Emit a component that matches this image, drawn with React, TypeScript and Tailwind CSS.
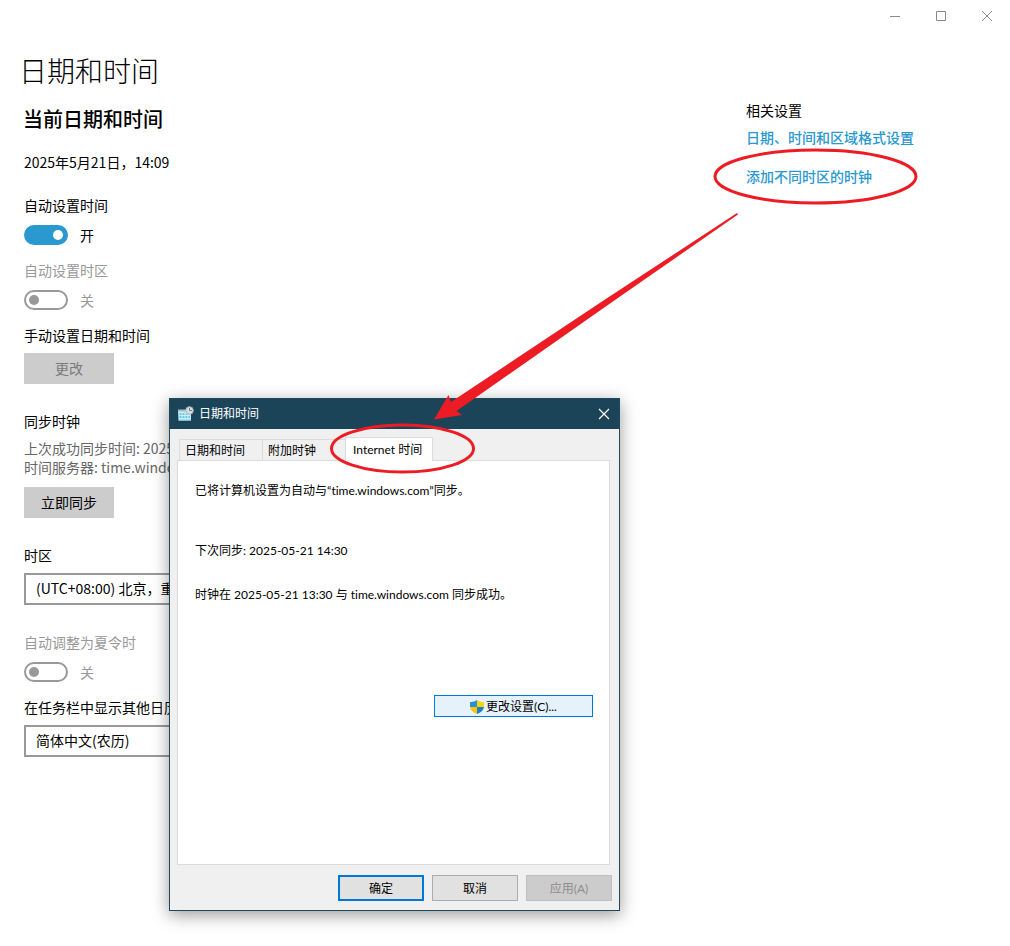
import { useState } from "react";
import type { ReactNode } from "react";

const TABS = ["日期和时间", "附加时钟", "Internet 时间"];

interface ToggleProps {
  label: string;
  defaultOn?: boolean;
  disabled?: boolean;
}

function Toggle({ label, defaultOn = false, disabled = false }: ToggleProps) {
  const [on, setOn] = useState(defaultOn);

  return (
    <label className={disabled ? "block text-[#999999]" : "block text-black"}>
      <span className="block leading-5">{label}</span>
      <span className="mt-2 flex h-6 items-center gap-3">
        <input
          type="checkbox"
          role="switch"
          checked={on}
          disabled={disabled}
          onChange={(e) => setOn(e.target.checked)}
          className="h-5 w-11 appearance-none rounded-full border-2 border-[#999999] bg-white p-[3px] before:block before:size-[10px] before:rounded-full before:bg-[#999999] checked:border-[#2999cf] checked:bg-[#2999cf] checked:before:ml-6 checked:before:bg-white"
        />
        <span>{on ? "开" : "关"}</span>
      </span>
    </label>
  );
}

interface SelectFieldProps {
  id: string;
  label: string;
  options: string[];
}

function SelectField({ id, label, options }: SelectFieldProps) {
  return (
    <div>
      <label htmlFor={id} className="block leading-5">
        {label}
      </label>
      <select
        id={id}
        className="mt-2 block h-8 w-full max-w-96 appearance-none border-2 border-[#999999] bg-white px-[10px] pb-[2px] text-sm"
      >
        {options.map((option) => (
          <option key={option}>{option}</option>
        ))}
      </select>
    </div>
  );
}

function CaptionButton({ name, children }: { name: string; children: ReactNode }) {
  return (
    <button
      type="button"
      aria-label={name}
      className="flex h-8 w-[46px] items-center justify-center text-[#8a8a8a]"
    >
      <svg width="12" height="12" viewBox="0 0 12 12" fill="none" stroke="currentColor">
        {children}
      </svg>
    </button>
  );
}

function CalendarClockIcon() {
  return (
    <svg width="16" height="16" viewBox="0 0 16 16">
      <path d="M0 4h13v10.5H0.5z" fill="#c9eef8" />
      <path d="M0 3.5h8v2H0z" fill="#a9bcc5" />
      <path
        d="M1.5 7h2v2h-2zM4.5 7h2v2h-2zM7.5 8h2v1h-2zM1.5 10h2v2h-2zM4.5 10h2v2h-2zM7.5 10h2v2h-2zM10.5 10h1.5v2h-1.5z"
        fill="#6ccbe6"
      />
      <path d="M0.5 13.5h12v1h-12z" fill="#8fd4e8" />
      <circle cx="11.5" cy="4.5" r="3.8" fill="#d5dde1" stroke="#a3b1b8" />
      <path d="M11.5 2v2.5h2.5" fill="none" stroke="#6c7c85" />
    </svg>
  );
}

function ShieldIcon() {
  return (
    <svg width="14" height="14" viewBox="0 0 14 14">
      <path d="M7 0C5 1.4 2.6 2 0 2V7H7z" fill="#2f8fd6" />
      <path d="M7 0c2 1.4 4.4 2 7 2V7H7z" fill="#fcd116" />
      <path d="M0 7C0.5 10.4 3.2 12.4 7 14V7z" fill="#fbc50f" />
      <path d="M14 7C13.5 10.4 10.8 12.4 7 14V7z" fill="#1f7fc8" />
    </svg>
  );
}

function DateTimeDialog() {
  const [activeTab, setActiveTab] = useState(TABS[2]);

  return (
    <div
      role="dialog"
      aria-label="日期和时间"
      className="absolute top-[398px] left-[169px] w-[451px] border border-[#1f485c] bg-[#f0f0f0] font-[Lato,'Noto_Sans_CJK_SC',sans-serif] text-xs text-black shadow-[0_4px_16px_rgba(0,0,0,0.4)] [font-variant-ligatures:none]"
    >
      {/* Title bar */}
      <div className="flex h-[30px] items-center bg-[#1c4459] pl-2 text-white">
        <CalendarClockIcon />
        <span className="ml-[5px] flex-1">日期和时间</span>
        <button type="button" aria-label="关闭" className="flex h-full w-[30px] items-center justify-center">
          <svg width="12" height="12" viewBox="0 0 12 12" stroke="currentColor" strokeWidth="1.2">
            <path d="M1 1l10 10M11 1L1 11" />
          </svg>
        </button>
      </div>

      {/* Tabs */}
      <div className="pt-2 pr-[9px] pl-[7px]">
        <div role="tablist" className="flex items-end pl-[2px]">
          {TABS.map((tab) => (
            <button
              key={tab}
              type="button"
              role="tab"
              aria-selected={tab === activeTab}
              onClick={() => setActiveTab(tab)}
              className={
                tab === activeTab
                  ? "relative z-10 -mb-px h-6 w-[88px] border border-b-0 border-[#dcdcdc] bg-white pl-[7px] text-left"
                  : "h-[21px] w-[83px] border border-r-0 border-b-0 border-[#dcdcdc] bg-[#f0f0f0] pt-px pl-[5px] text-left"
              }
            >
              {tab}
            </button>
          ))}
        </div>

        <div
          role="tabpanel"
          className="flex min-h-[405px] flex-col border border-[#dcdcdc] bg-white pt-5 pr-4 pl-[17px] leading-5"
        >
          <p>已将计算机设置为自动与“time.windows.com”同步。</p>
          <p className="mt-10">下次同步: 2025-05-21 14:30</p>
          <p className="mt-6">时钟在 2025-05-21 13:30 与 time.windows.com 同步成功。</p>
          <button
            type="button"
            className="mt-[90px] flex h-[22px] w-[159px] items-center justify-center gap-[2px] self-end border border-[#0078d7] bg-[#e5f1fb] pt-px"
          >
            <ShieldIcon />
            更改设置(C)...
          </button>
        </div>
      </div>

      {/* Footer */}
      <div className="flex justify-end gap-2 px-[7px] pt-[10px] pb-[9px]">
        <button type="button" className="h-[26px] w-[86px] border-2 border-[#0078d7] bg-[#e1e1e1] pt-px">
          确定
        </button>
        <button type="button" className="h-[26px] w-[86px] border border-[#adadad] bg-[#e1e1e1] pt-px">
          取消
        </button>
        <button
          type="button"
          disabled
          className="h-[26px] w-[86px] border border-[#bfbfbf] bg-[#cccccc] pt-px text-[#8c8c8c]"
        >
          应用(A)
        </button>
      </div>
    </div>
  );
}

// Red circles and the arrow drawn over both windows
function Annotations() {
  return (
    <svg
      className="pointer-events-none absolute top-0 left-0"
      width="1010"
      height="946"
      viewBox="0 0 1010 946"
      fill="none"
    >
      <ellipse cx="815.5" cy="176.5" rx="100.5" ry="26.5" stroke="#ed1c24" strokeWidth="3" />
      <ellipse cx="402.5" cy="448.5" rx="71" ry="23.5" stroke="#ed1c24" strokeWidth="3" />
      <path
        d="M434 419.5L448.5 395L451 402L605 299.5L737 213L738 214.5L615 300L456.5 411L462 415Z"
        fill="#ed1c24"
      />
    </svg>
  );
}

export default function App() {
  return (
    <div className="relative min-h-screen overflow-hidden bg-white font-['Noto_Sans_CJK_SC',sans-serif] text-sm text-black">
      {/* Window controls */}
      <div className="flex justify-end">
        <CaptionButton name="最小化">
          <path d="M1 6.5h10" />
        </CaptionButton>
        <CaptionButton name="最大化">
          <path d="M1.5 1.5h9v9h-9z" />
        </CaptionButton>
        <CaptionButton name="关闭">
          <path d="M1 1l10 10M11 1L1 11" />
        </CaptionButton>
      </div>

      <div className="flex">
        <main className="min-w-0 flex-1 pt-[18px] pl-6">
          <h1 className="-ml-[5px] text-[28px] leading-10 font-light">日期和时间</h1>
          <h2 className="-ml-px mt-[13px] text-xl leading-8 font-medium">当前日期和时间</h2>
          <p className="mt-[15px] leading-6">2025年5月21日，14:09</p>

          <div className="mt-[21px] space-y-[13px]">
            <Toggle label="自动设置时间" defaultOn />
            <Toggle label="自动设置时区" disabled />
          </div>

          <h3 className="mt-[13px] leading-5">手动设置日期和时间</h3>
          <button type="button" disabled className="mt-2 h-[31px] w-[90px] bg-[#cccccc] pb-[2px] text-[#7a7a7a]">
            更改
          </button>

          <h3 className="mt-[27px] leading-5">同步时钟</h3>
          <p className="mt-2 leading-[19px] text-[#666666]">
            上次成功同步时间: 2025
            <br />
            时间服务器: time.windows.com
          </p>
          <button type="button" className="mt-[10px] h-[31px] w-[90px] bg-[#cccccc] pb-[2px]">
            立即同步
          </button>

          <div className="mt-[27px]">
            <SelectField
              id="timezone"
              label="时区"
              options={["(UTC+08:00) 北京，重庆，香港特别行政区，乌鲁木齐"]}
            />
          </div>
          <div className="mt-[27px]">
            <Toggle label="自动调整为夏令时" disabled />
          </div>
          <div className="mt-[13px]">
            <SelectField id="calendar" label="在任务栏中显示其他日历" options={["简体中文(农历)"]} />
          </div>
        </main>

        <aside className="w-66 shrink-0 pt-[68px]">
          <h2 className="leading-5">相关设置</h2>
          <ul className="mt-[7px] space-y-[19px] font-medium text-[#2999cf]">
            <li className="leading-5">
              <a href="#region">日期、时间和区域格式设置</a>
            </li>
            <li className="leading-5">
              <a href="#clocks">添加不同时区的时钟</a>
            </li>
          </ul>
        </aside>
      </div>

      <DateTimeDialog />
      <Annotations />
    </div>
  );
}
